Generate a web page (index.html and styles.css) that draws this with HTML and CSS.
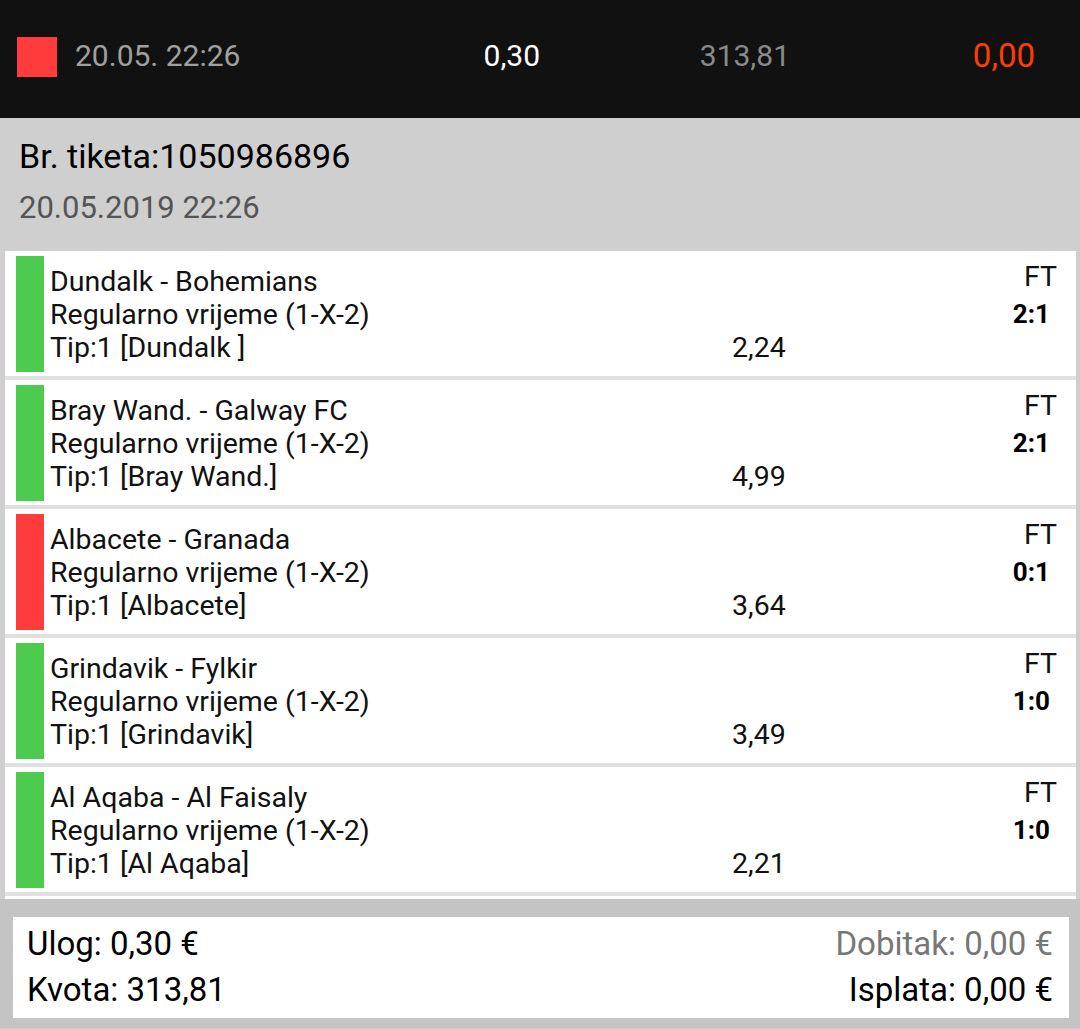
FILE: index.html
```html
<!DOCTYPE html>
<html lang="hr">
<head>
<meta charset="utf-8">
<title>Tiket</title>
<link rel="stylesheet" href="styles.css">
</head>
<body>
<div class="topbar">
  <span class="status-square"></span>
  <span class="top-date">20.05. 22:26</span>
  <span class="top-stake">0,30</span>
  <span class="top-odds">313,81</span>
  <span class="top-win">0,00</span>
</div>

<div class="ticket-head">
  <div class="ticket-no">Br. tiketa:1050986896</div>
  <div class="ticket-date">20.05.2019 22:26</div>
</div>

<div class="list-wrap">
  <div class="list">
    <div class="row">
      <span class="bar win"></span>
      <div class="info">
        <div>Dundalk - Bohemians</div>
        <div>Regularno vrijeme (1-X-2)</div>
        <div>Tip:1 [Dundalk ]</div>
      </div>
      <div class="odds"><div>&nbsp;</div><div>&nbsp;</div><div>2,24</div></div>
      <div class="result"><div class="ft">FT</div><div class="score">2:1</div><div>&nbsp;</div></div>
    </div>
    <div class="row">
      <span class="bar win"></span>
      <div class="info">
        <div>Bray Wand. - Galway FC</div>
        <div>Regularno vrijeme (1-X-2)</div>
        <div>Tip:1 [Bray Wand.]</div>
      </div>
      <div class="odds"><div>&nbsp;</div><div>&nbsp;</div><div>4,99</div></div>
      <div class="result"><div class="ft">FT</div><div class="score">2:1</div><div>&nbsp;</div></div>
    </div>
    <div class="row">
      <span class="bar lose"></span>
      <div class="info">
        <div>Albacete - Granada</div>
        <div>Regularno vrijeme (1-X-2)</div>
        <div>Tip:1 [Albacete]</div>
      </div>
      <div class="odds"><div>&nbsp;</div><div>&nbsp;</div><div>3,64</div></div>
      <div class="result"><div class="ft">FT</div><div class="score">0:1</div><div>&nbsp;</div></div>
    </div>
    <div class="row">
      <span class="bar win"></span>
      <div class="info">
        <div>Grindavik - Fylkir</div>
        <div>Regularno vrijeme (1-X-2)</div>
        <div>Tip:1 [Grindavik]</div>
      </div>
      <div class="odds"><div>&nbsp;</div><div>&nbsp;</div><div>3,49</div></div>
      <div class="result"><div class="ft">FT</div><div class="score">1:0</div><div>&nbsp;</div></div>
    </div>
    <div class="row">
      <span class="bar win"></span>
      <div class="info">
        <div>Al Aqaba - Al Faisaly</div>
        <div>Regularno vrijeme (1-X-2)</div>
        <div>Tip:1 [Al Aqaba]</div>
      </div>
      <div class="odds"><div>&nbsp;</div><div>&nbsp;</div><div>2,21</div></div>
      <div class="result"><div class="ft">FT</div><div class="score">1:0</div><div>&nbsp;</div></div>
    </div>
  </div>
</div>

<div class="footer">
  <div class="summary">
    <div class="sum-line"><span>Ulog: 0,30 €</span><span class="muted">Dobitak: 0,00 €</span></div>
    <div class="sum-line"><span>Kvota: 313,81</span><span>Isplata: 0,00 €</span></div>
  </div>
</div>
</body>
</html>
```

FILE: styles.css
```css
* { box-sizing: border-box; }

html, body {
  margin: 0;
  padding: 0;
}

body {
  width: 1080px;
  height: 1029px;
  overflow: hidden;
  background: #cfcfcf;
  font-family: Roboto, "Liberation Sans", Arial, sans-serif;
  color: #000;
}

.topbar {
  height: 118px;
  background: #111111;
  display: flex;
  align-items: center;
  padding: 0 45px 7px 17px;
  font-size: 30px;
}

.status-square {
  width: 40px;
  height: 40px;
  background: #ff3b3b;
  flex: none;
  margin-top: 2px;
}

.top-date {
  margin-left: 18px;
  flex: 1;
  color: #a0a0a0;
}

.top-stake {
  color: #ffffff;
}

.top-odds {
  width: 250px;
  text-align: right;
  color: #8a8a8a;
}

.top-win {
  width: 245px;
  text-align: right;
  color: #ff3d00;
  font-size: 33px;
}

.ticket-head {
  height: 133px;
  padding: 12px 19px 17px;
  background: #cfcfcf;
}

.ticket-no {
  font-size: 34px;
  line-height: 52px;
  color: #000;
}

.ticket-date {
  font-size: 31px;
  line-height: 52px;
  color: #555555;
}

.list-wrap {
  padding: 0 4px 0 5px;
  background: #cfcfcf;
}

.list {
  background: #ffffff;
  padding-bottom: 3px;
}

.row {
  display: flex;
  align-items: center;
  height: 129px;
  padding: 5px 19px 4px 11px;
  border-bottom: 4px solid #e0e0e0;
  font-size: 28.5px;
  line-height: 33px;
  color: #111;
}

.bar {
  width: 28px;
  height: 116px;
  flex: none;
  align-self: flex-start;
}

.bar.win { background: #4ccb4e; }
.bar.lose { background: #ff3b3b; }

.info {
  margin-left: 6px;
  width: 682px;
  flex: none;
  white-space: nowrap;
}

.odds {
  flex: 1;
}

.result {
  text-align: right;
}

.ft {
  margin-top: -5px;
  margin-bottom: 5px;
}

.score {
  font-weight: 700;
  font-size: 26px;
  padding-right: 7px;
  color: #000;
}

.footer {
  background: #c4c4c4;
  padding: 18px 11px 10px 13px;
  height: 129px;
}

.summary {
  background: #ffffff;
  height: 101px;
  padding: 4px 16px 5px 14px;
  font-size: 33px;
  line-height: 46px;
}

.sum-line {
  display: flex;
  justify-content: space-between;
}

.muted {
  color: #777777;
}
```
